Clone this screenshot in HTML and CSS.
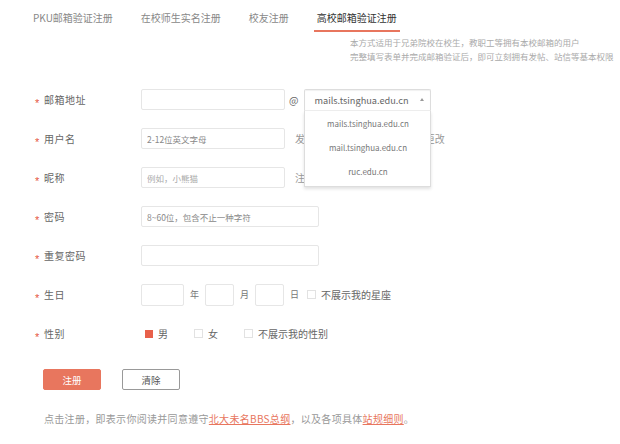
FILE: index.html
```html
<!DOCTYPE html>
<html lang="zh-CN">
<head>
<meta charset="utf-8">
<title>高校邮箱验证注册</title>
<link rel="stylesheet" href="styles.css">
</head>
<body>
<div class="page">
  <nav class="tabs">
    <span class="tab">PKU邮箱验证注册</span>
    <span class="tab">在校师生实名注册</span>
    <span class="tab">校友注册</span>
    <span class="tab active">高校邮箱验证注册</span>
  </nav>
  <div class="info">
    <div>本方式适用于兄弟院校在校生，教职工等拥有本校邮箱的用户</div>
    <div>完整填写表单并完成邮箱验证后，即可立刻拥有发帖、站信等基本权限</div>
  </div>
  <form class="form">
    <div class="row">
      <label class="label"><span class="star">*</span>邮箱地址</label>
      <div class="field">
        <input class="input w-md" type="text">
        <span class="at">@</span>
        <div class="select">
          <div class="select-box"><span>mails.tsinghua.edu.cn</span><span class="caret"></span></div>
          <ul class="options">
            <li>mails.tsinghua.edu.cn</li>
            <li>mail.tsinghua.edu.cn</li>
            <li>ruc.edu.cn</li>
          </ul>
        </div>
      </div>
    </div>
    <div class="row">
      <label class="label"><span class="star">*</span>用户名</label>
      <div class="field">
        <input class="input w-md" type="text" placeholder="2-12位英文字母">
        <span class="hint">发帖时显示的ID，注册后不可更改</span>
      </div>
    </div>
    <div class="row">
      <label class="label"><span class="star">*</span>昵称</label>
      <div class="field">
        <input class="input w-md light" type="text" placeholder="例如，小熊猫">
        <span class="hint">注册后可以修改</span>
      </div>
    </div>
    <div class="row">
      <label class="label"><span class="star">*</span>密码</label>
      <div class="field">
        <input class="input w-lg" type="password" placeholder="8~60位，包含不止一种字符">
      </div>
    </div>
    <div class="row">
      <label class="label"><span class="star">*</span>重复密码</label>
      <div class="field">
        <input class="input w-lg" type="password">
      </div>
    </div>
    <div class="row">
      <label class="label"><span class="star">*</span>生日</label>
      <div class="field birth">
        <input class="input date year" type="text">
        <span class="unit">年</span>
        <input class="input date" type="text">
        <span class="unit">月</span>
        <input class="input date" type="text">
        <span class="unit">日</span>
        <span class="check"><span class="box"></span>不展示我的星座</span>
      </div>
    </div>
    <div class="row">
      <label class="label"><span class="star">*</span>性别</label>
      <div class="field gender">
        <span class="check"><span class="box on"></span>男</span>
        <span class="check"><span class="box"></span>女</span>
        <span class="check"><span class="box"></span>不展示我的性别</span>
      </div>
    </div>
    <div class="actions">
      <button type="button" class="btn primary">注册</button>
      <button type="button" class="btn">清除</button>
    </div>
  </form>
  <p class="footer">点击注册，即表示你阅读并同意遵守<a href="#">北大未名BBS总纲</a>，以及各项具体<a href="#">站规细则</a>。</p>
</div>
</body>
</html>
```

FILE: styles.css
```css
* {
  box-sizing: border-box;
  margin: 0;
  padding: 0;
}

html, body {
  background: #fff;
}

body {
  width: 620px;
  height: 444px;
  overflow: hidden;
  font-family: "Noto Sans CJK SC", "Noto Sans", sans-serif;
  font-size: 10px;
  color: #666;
}

.tabs {
  display: flex;
  gap: 22px;
  padding: 10px 0 0 30px;
}

.tab {
  padding: 0 3px 4px;
  line-height: 16px;
  font-size: 10px;
  color: #888;
  border-bottom: 2px solid transparent;
  white-space: nowrap;
}

.tab.active {
  color: #333;
  border-bottom-color: #e8765e;
}

.info {
  margin: 3px 0 0 350px;
  font-size: 8.5px;
  line-height: 14px;
  color: #aaa;
  white-space: nowrap;
}

.form {
  margin-top: 17px;
}

.row {
  display: flex;
  align-items: center;
  height: 39px;
  padding-left: 35px;
}

.label {
  flex: none;
  width: 106px;
  display: flex;
  align-items: center;
  font-size: 10px;
  line-height: 14px;
  letter-spacing: 0.5px;
  color: #666;
}

.star {
  width: 9px;
  color: #e5553f;
  font-family: "Liberation Sans", sans-serif;
  font-size: 11px;
  line-height: 14px;
  transform: translateY(3px);
}

.field {
  display: flex;
  align-items: center;
  position: relative;
}

.input {
  height: 21px;
  border: 1px solid #e6e6e6;
  border-radius: 2px;
  padding: 0 5px;
  font-family: "Noto Sans CJK SC", "Noto Sans", sans-serif;
  font-size: 8.5px;
  color: #555;
  background: #fff;
  outline: none;
}

.input::placeholder {
  color: #888;
}

.input.light::placeholder {
  color: #aaa;
}

.w-md {
  width: 144px;
}

.w-lg {
  width: 178px;
}

.at {
  margin: 0 6px 0 4px;
  font-size: 10px;
  color: #666;
}

.select {
  position: relative;
  width: 127px;
}

.select-box {
  height: 22px;
  border: 1px solid #ddd;
  border-bottom-color: #eee;
  border-radius: 2px 2px 0 0;
  padding: 0 6px 0 9px;
  display: flex;
  align-items: center;
  justify-content: space-between;
  font-size: 9.2px;
  color: #666;
  background: #fff;
  box-shadow: inset 0 1px 1px rgba(0, 0, 0, 0.06);
}

.caret {
  width: 0;
  height: 0;
  border-left: 2.5px solid transparent;
  border-right: 2.5px solid transparent;
  border-bottom: 3px solid #999;
}

.options {
  position: absolute;
  top: 100%;
  left: 0;
  width: 127px;
  z-index: 5;
  list-style: none;
  background: #fff;
  border: 1px solid #ddd;
  border-top: none;
  box-shadow: 0 2px 3px rgba(0, 0, 0, 0.12);
  padding: 1px 0 2px;
}

.options li {
  height: 24px;
  line-height: 24px;
  text-align: center;
  font-size: 8px;
  color: #777;
}

.hint {
  margin-left: 10px;
  font-size: 10px;
  color: #999;
  white-space: nowrap;
}

.date {
  width: 29px;
}

.date.year {
  width: 43px;
}

.birth .input {
  height: 22px;
}

.unit {
  width: 21px;
  text-align: center;
  font-size: 9px;
  color: #777;
}

.check {
  display: flex;
  align-items: center;
  gap: 5px;
  font-size: 10px;
  color: #666;
  white-space: nowrap;
}

.birth .check {
  margin-left: 2px;
}

.box {
  width: 9px;
  height: 9px;
  border: 1px solid #e2e2e2;
  background: #fff;
}

.box.on {
  width: 8px;
  height: 8px;
  border-color: #e8604a;
  background: #e8604a;
}

.gender {
  gap: 26px;
  padding-left: 4px;
}

.actions {
  display: flex;
  gap: 21px;
  margin: 16px 0 0 43px;
}

.btn {
  width: 58px;
  height: 21px;
  border: 1px solid #999;
  border-radius: 2px;
  background: #fff;
  font-family: "Noto Sans CJK SC", "Noto Sans", sans-serif;
  font-size: 9.5px;
  color: #555;
}

.btn.primary {
  border-color: #e8765e;
  background: #e8765e;
  color: #fff;
}

.footer {
  margin: 22px 0 0 44px;
  font-size: 10px;
  line-height: 14px;
  letter-spacing: 0.3px;
  color: #999;
  white-space: nowrap;
}

.footer a {
  color: #e8765e;
  text-decoration: underline;
}
```
